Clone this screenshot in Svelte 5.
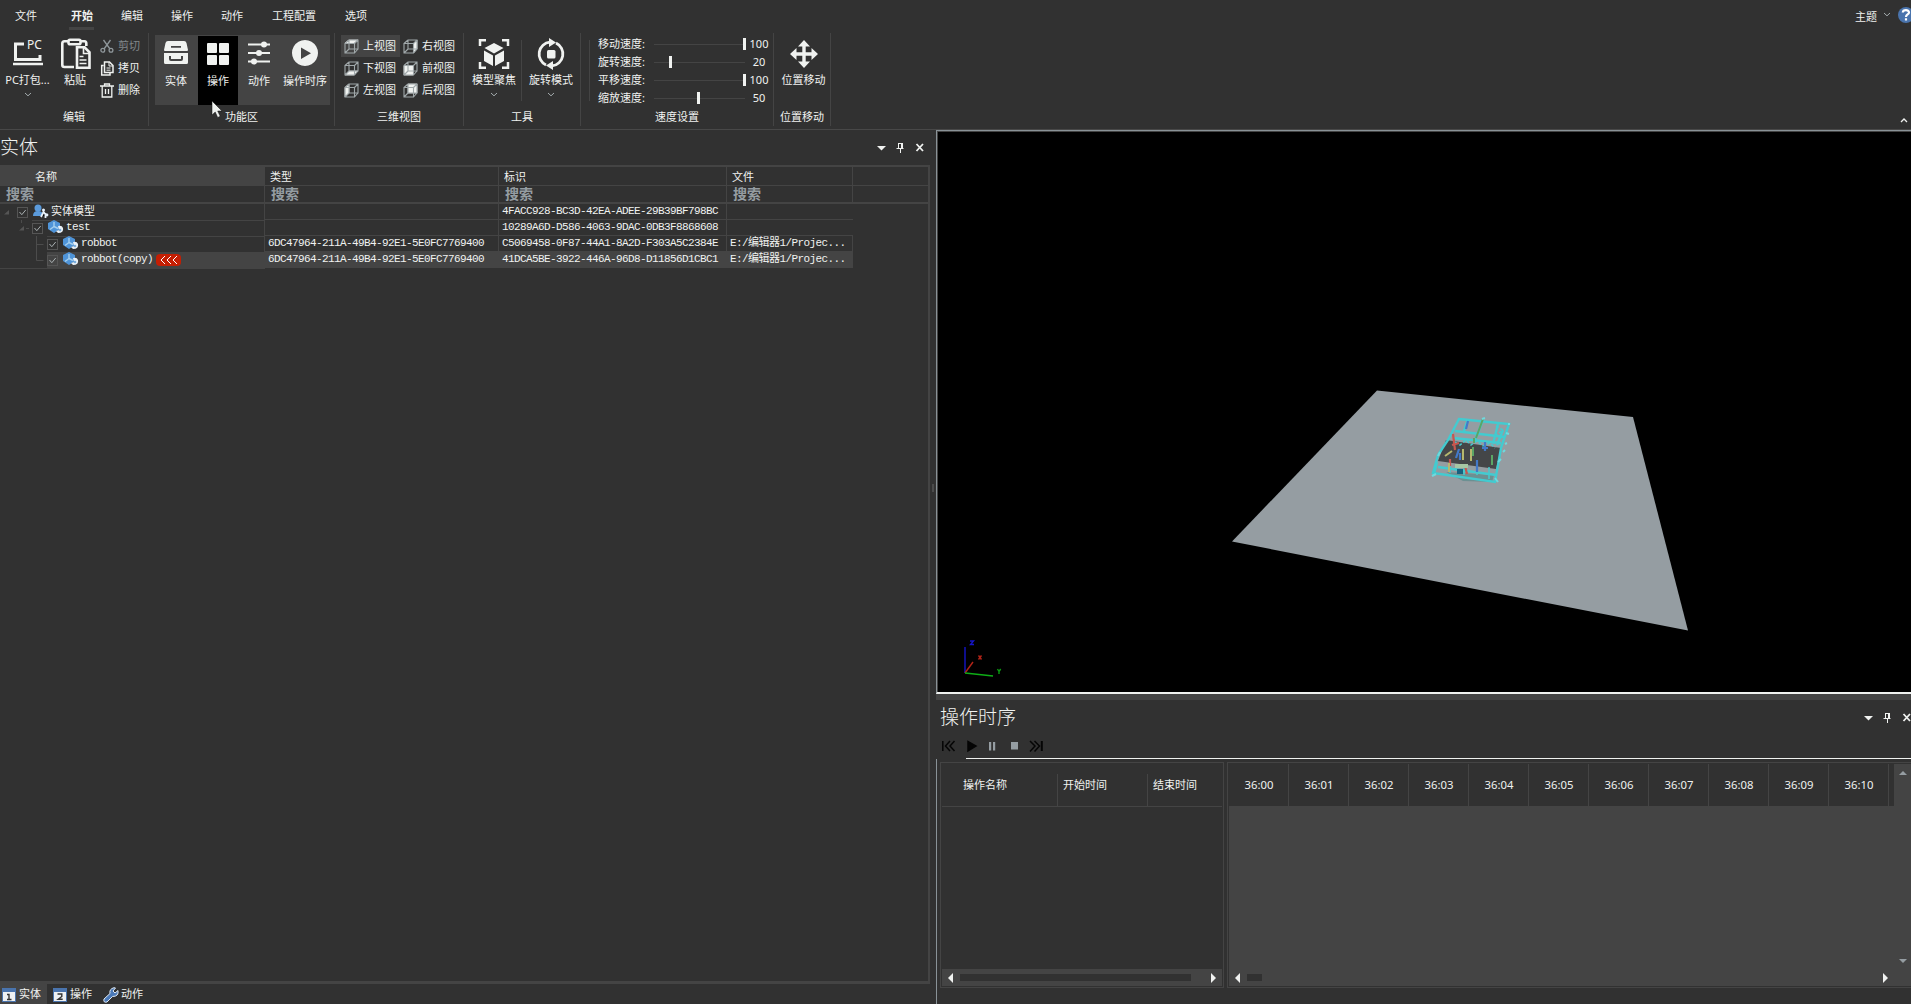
<script lang="ts">
  const tabs = ['文件', '开始', '编辑', '操作', '动作', '工程配置', '选项'];
  const functions = [
    { icon: 'drawer', label: '实体', w: 43 },
    { icon: 'grid', label: '操作', w: 40 },
    { icon: 'sliders', label: '动作', w: 43 },
    { icon: 'play', label: '操作时序', w: 49 }
  ];
  // Each view icon is a wire cube with one face filled.
  const views = [
    { label: '上视图', face: '1,4 5,1 14,1 10,4' },
    { label: '右视图', face: '10.5,4.5 14,1 14,10 10.5,14' },
    { label: '下视图', face: '1,14 5,10 14,10 10,14' },
    { label: '前视图', face: '1,5 10,5 10,14 1,14' },
    { label: '左视图', face: '1,4.5 5,1 5,10 1,14' },
    { label: '后视图', face: '5,1 14,1 14,10 5,10' }
  ];
  const speeds = [
    { label: '移动速度:', value: 100, pos: 89 },
    { label: '旋转速度:', value: 20, pos: 15 },
    { label: '平移速度:', value: 100, pos: 89 },
    { label: '缩放速度:', value: 50, pos: 43 }
  ];
  const rows = [
    { depth: 0, kind: 'root', name: '实体模型', type: '', id: '4FACC928-BC3D-42EA-ADEE-29B39BF798BC', file: false },
    { depth: 1, kind: 'cube', name: 'test', type: '', id: '10289A6D-D586-4063-9DAC-0DB3F8868608', file: false },
    { depth: 2, kind: 'cube', name: 'robbot', type: '6DC47964-211A-49B4-92E1-5E0FC7769400', id: 'C5069458-0F87-44A1-8A2D-F303A5C2384E', file: true },
    { depth: 2, kind: 'cube', name: 'robbot(copy)', type: '6DC47964-211A-49B4-92E1-5E0FC7769400', id: '41DCA5BE-3922-446A-96D8-D11856D1CBC1', file: true, sel: true }
  ];
  const times = ['36:00', '36:01', '36:02', '36:03', '36:04', '36:05', '36:06', '36:07', '36:08', '36:09', '36:10'];
</script>

{#snippet chevron()}
  <svg class="chev" width="8" height="5" viewBox="0 0 8 5"><path d="M1 1l3 2.800L7 1" /></svg>
{/snippet}

{#snippet panelTools()}
  <svg width="47" height="11" viewBox="0 0 47 11">
    <path d="M0 4h9L4.500 8.500z" fill="#f0f2f0" />
    <path d="M21.500 1v5M25.500 1v5M21 1.500h5M19.500 6.500h7M23.500 7v4M24.500 1v5" stroke="#f0f2f0" fill="none" />
    <path d="M39.500 2l6.500 7M46 2L39.500 9" stroke="#f0f2f0" stroke-width="1.800" fill="none" />
  </svg>
{/snippet}

<div class="app">
  <header class="ribbon">
    <nav>
      {#each tabs as t, i}<span class:first={i === 0} class:on={i === 1} class:wide={i === 5}>{t}</span>{/each}
      <div class="theme">
        <span>主题</span>
        {@render chevron()}
        <svg class="help" width="16" height="16" viewBox="0 0 16 16">
          <circle cx="8" cy="8" r="8" fill="#4a74ad" />
          <path d="M4.800 5.500C5 2.500 11 2.300 11 5.500C11 7.600 8 7.400 8 10M8 11.300v2.200" stroke="#fff" stroke-width="2.200" fill="none" />
        </svg>
      </div>
    </nav>

    <div class="groups">
      <section class="group g-edit">
        <div class="tools">
          <div class="big b-pc">
            <svg width="32" height="32" viewBox="0 0 32 32">
              <path d="M12 6H3.500V21.500H28V17" stroke="#f0f2f0" stroke-width="3" fill="none" />
              <path d="M1 26h30" stroke="#f0f2f0" stroke-width="2.500" />
              <text x="15" y="10.500" font-size="12" fill="#f0f2f0">PC</text>
            </svg>
            <b>PC打包...</b>{@render chevron()}
          </div>
          <div class="big b-paste">
            <svg width="32" height="32" viewBox="0 0 32 32" fill="none" stroke="#f0f2f0" stroke-width="2.600">
              <path d="M8 3.300H4.500Q2.300 3.300 2.300 5.500V27Q2.300 29 4.500 29H14M21 3.300h3.500Q26.300 3.300 26.300 5.500V8" />
              <rect x="8.500" y="1.800" width="12" height="4.500" rx="1.500" />
              <path d="M17 9.300h7.500l5 5V29.700H17z" />
              <path d="M23.500 9v6.500H30M19.500 18.500h4M19.500 22h7M19.500 25.500h7" stroke-width="1.600" />
            </svg>
            <b>粘贴</b>
          </div>
          <div class="small-col">
            <div class="small dim">
              <svg width="14" height="14" viewBox="0 0 14 14" fill="none" stroke="#8f979b" stroke-width="1.300">
                <path d="M3.500 1l6.500 9M10.500 1L4 10" /><circle cx="2.800" cy="11.200" r="1.900" /><circle cx="11" cy="11.200" r="1.900" />
              </svg><b>剪切</b>
            </div>
            <div class="small">
              <svg width="14" height="15" viewBox="0 0 14 15" fill="none" stroke="#f0f2f0" stroke-width="1.500">
                <path d="M3.500 4.500H1.700V14H10V12M4.500 1h5l3.500 3.500V11.500H4.500z" /><path d="M9 1v4h4M6.500 7h4M6.500 9.200h4" stroke-width="1" />
              </svg><b>拷贝</b>
            </div>
            <div class="small">
              <svg width="14" height="15" viewBox="0 0 14 15" fill="none" stroke="#f0f2f0" stroke-width="1.300">
                <path d="M0 3h14M4.500 3V1h5v2M2.200 3v11h9.600V3M5.500 6v5M8.500 6v5" />
              </svg><b>删除</b>
            </div>
          </div>
        </div>
        <footer>编辑</footer>
      </section>

      <section class="group g-func">
        <div class="func">
          {#each functions as f, i}
            <div class="fbtn" class:black={i === 1} style:width="{f.w}px">
              <svg width="28" height="28" viewBox="0 0 28 28" fill="#f0f2f0">
                {#if f.icon === 'drawer'}
                  <path fill-rule="evenodd" d="M6 2h16q2 0 2.500 2l1.500 7q0 1-1 1H3q-1 0-1-1l1.500-7Q4 2 6 2zM9 7v1.800h10V7z" />
                  <path fill-rule="evenodd" d="M2 14h24v9.500q0 1.500-1.500 1.500h-21Q2 25 2 23.500zM7 17v3q0 2 2 2h10q2 0 2-2v-3h-2v3H9v-3z" />
                {:else if f.icon === 'grid'}
                  <rect x="3" y="3" width="10" height="10" rx="1" /><rect x="15" y="3" width="10" height="10" rx="1" />
                  <rect x="3" y="15" width="10" height="10" rx="1" /><rect x="15" y="15" width="10" height="10" rx="1" />
                {:else if f.icon === 'sliders'}
                  <path d="M3 4.500h22v2H3zM3 13h22v2H3zM3 21.500h22v2H3z" />
                  <circle cx="19" cy="5.500" r="3" /><circle cx="14" cy="14" r="3" /><circle cx="9" cy="22.500" r="3" />
                {:else}
                  <path fill-rule="evenodd" d="M14 1a13 13 0 1 0 .01 0zM10 8.500v11.500l10-5.800z" />
                {/if}
              </svg>
              <b>{f.label}</b>
            </div>
          {/each}
        </div>
        <footer>功能区</footer>
      </section>

      <section class="group g-view">
        <div class="views">
          {#each views as v, i}
            <div class="view" class:lit={i === 0}>
              <svg width="15" height="15" viewBox="0 0 15 15" fill="none" stroke="#a0a8aa" stroke-width="1.100">
                <polygon points={v.face} fill="#f0f2f0" stroke="#f0f2f0" stroke-width=".7" />
                <path d="M1 4.500h9.500V14H1zM5 1h9v9H5zM1 4.500L5 1M10.500 4.500L14 1M10.500 14L14 10M1 14l4-4" />
              </svg><b>{v.label}</b>
            </div>
          {/each}
        </div>
        <footer>三维视图</footer>
      </section>

      <section class="group g-tool">
        <div class="tools">
          <div class="big b-focus">
            <svg width="32" height="32" viewBox="0 0 32 32">
              <path d="M2 8V2.200h6M24 2.200h6V8M30 24v5.800h-6M8 29.800H2V24" stroke="#f0f2f0" stroke-width="2.500" fill="none" />
              <path d="M16 5l9.500 5L16 15.500 6.500 10zM6 12.500l9 5V28l-9-5zM26 12.500l-9 5V28l9-5z" fill="#f0f2f0" />
            </svg>
            <b>模型聚焦</b>{@render chevron()}
          </div>
          <i class="bar"></i>
          <div class="big b-rot">
            <svg width="32" height="32" viewBox="0 0 32 32">
              <path d="M11 27A12 12 0 0 1 15 4.200M21 5A12 12 0 0 1 17 27.800" stroke="#f0f2f0" stroke-width="2.800" fill="none" />
              <path d="M14 0l7 4.500-7 4.500zM18 23v9l-7-4.500z" fill="#f0f2f0" />
              <rect x="12" y="12" width="8.500" height="8.500" rx="1.500" fill="#f0f2f0" />
            </svg>
            <b>旋转模式</b>{@render chevron()}
          </div>
        </div>
        <footer>工具</footer>
      </section>

      <section class="group g-speed">
        <div class="speeds">
          {#each speeds as s}
            <div class="speed">
              <span>{s.label}</span>
              <div class="track"><i style:margin-left="{s.pos}px"></i></div>
              <em>{s.value}</em>
            </div>
          {/each}
        </div>
        <footer>速度设置</footer>
      </section>

      <section class="group g-move">
        <div class="tools">
          <div class="big b-move">
            <svg width="32" height="32" viewBox="0 0 32 32" fill="#f0f2f0">
              <path d="M16 2l6 6.500h-4.300v5.800h5.800V10L30 16l-6.500 6v-4.300h-5.800v5.800H22L16 30l-6-6.500h4.300v-5.800H8.500V22L2 16l6.500-6v4.300h5.800V8.500H10z" />
            </svg>
            <b>位置移动</b>
          </div>
        </div>
        <footer>位置移动</footer>
      </section>
      <div class="collapse"><svg width="8" height="5" viewBox="0 0 8 5"><path d="M1 4l3-3 3 3" stroke="#f0f2f0" stroke-width="1.300" fill="none" /></svg></div>
    </div>
  </header>

  <main>
    <div class="left">
      <div class="title"><h2>实体</h2>{@render panelTools()}</div>
      <div class="tree">
        <div class="trow head"><span class="c1">名称</span><span>类型</span><span>标识</span><span>文件</span><span></span></div>
        <div class="trow search"><span>搜索</span><span>搜索</span><span>搜索</span><span>搜索</span><span></span></div>
        {#each rows as r, i}
          <div class="trow item" class:sel={r.sel}>
            <span class="namecell">
              <svg class="lines" height="16" viewBox="0 0 {17 + r.depth * 15} 16" width={17 + r.depth * 15}>
                {#if r.depth === 0}<path d="M9 6v4.500H4z" fill="#555" />
                {:else if r.depth === 1}<path d="M24 6v4.500h-5z" fill="#555" /><path d="M21.500 0v3M26 8.500h3" stroke="#4c4c4c" />
                {:else}<path d="M36.500 0V{i === 2 ? 16 : 8.5}M36.500 8.500h7" stroke="#4c4c4c" fill="none" />{/if}
              </svg>
              <svg class="check" width="11" height="11" viewBox="0 0 11 11"><rect x=".5" y=".5" width="10" height="10" fill="none" stroke="#555" /><path d="M2.500 5l2.300 2.700L8.700 3" fill="none" stroke="#a9b0b2" /></svg>
              <svg class="kind" width="16" height="14" viewBox="0 0 16 14">
                {#if r.kind === 'root'}
                  <circle cx="5" cy="4" r="3.500" fill="#5b9bdc" /><path d="M0 12q0-5 5-5t5 5z" fill="#5b9bdc" />
                  <circle cx="10.500" cy="6" r="1.500" fill="#e9f2fa" /><path d="M8 13l2.500-5 2.500 3M12.500 9v5" stroke="#e9f2fa" stroke-width="1.800" /><circle cx="14" cy="11" r="1.400" fill="#e9f2fa" />
                {:else}
                  <path d="M6 0l6 3v6l-6 4-6-4V3z" fill="#4f94d8" /><path d="M6 2v5M6 6.500L2 9.500M6 6.500l4 2" stroke="#a5d0ef" stroke-width="1.400" />
                  <path d="M10 6q4-1 5 2 1 5-5 5l-2-2 3-1z" fill="#eaf1f7" /><circle cx="12" cy="10" r="1.300" fill="#79addb" />
                {/if}
              </svg>
              <span class={r.kind === 'root' ? 'cn' : 'mono'}>{r.name}</span>
              {#if r.sel}<span class="badge"><svg width="18" height="8" viewBox="0 0 18 8"><path d="M5 0L1 4l4 4M11 0L7 4l4 4M17 0l-4 4 4 4" stroke="#fff" fill="none" /></svg></span>{/if}
            </span>
            <span class="mono">{r.type}</span>
            <span class="mono">{r.id}</span>
            <span class="mono">{#if r.file}E:/<span class="cjk">编辑器</span>1/Projec...{/if}</span>
          </div>
        {/each}
      </div>
      <div class="dock">
        <span class="on"><svg width="14" height="14" viewBox="0 0 14 14"><rect width="14" height="14" fill="#4a74ad" /><rect x="1" y="4" width="12" height="9" fill="#eef1f3" /><path d="M5 6.500h2V11M5 11.500h4.500" stroke="#333" stroke-width="1.400" fill="none" /></svg><b>实体</b></span>
        <span><svg width="14" height="14" viewBox="0 0 14 14"><rect width="14" height="14" fill="#4a74ad" /><rect x="1" y="4" width="12" height="9" fill="#eef1f3" /><path d="M4.500 6h4.300v2.500L5.200 11.300h4.500" stroke="#333" stroke-width="1.400" fill="none" /></svg><b>操作</b></span>
        <span class="wr"><svg width="16" height="16" viewBox="0 0 16 16"><path d="M1 12l6-5.500Q6 2 11 .7l1.500.3L10 4l2 2 3-2.500Q16 9.500 9.500 9.500L4 15Q0 16 1 12z" fill="#4a79b8" stroke="#dfe9f3" /></svg><b>动作</b></span>
      </div>
    </div>
    <div class="split"><i></i></div>
    <div class="right">
      <div class="viewport">
        <svg width="973" height="560" viewBox="938 132 973 560">
          <path d="M1377 390.500L1633 417 1688 630.500 1232 541.500z" fill="#959da2" />
          <g class="model">
            <path d="M1446 472l48 3-2 7-29-1z" fill="#6c9092" />
            <path d="M1446 440l55 8-5 21-58-8z" fill="#444648" />
            <g fill="none" stroke="#43cbd0" stroke-width="2.400">
              <path d="M1459 419l50 5-8 24-6 34-62-9 5-18 10-15zM1455 431l50 6M1453 438l48 5M1438 467l58 8M1483 420l-8 20M1468 419l-4 12M1498 424l-5 20M1503 430l-6 15M1437 462l-3 12" />
              <path d="M1450 463v10M1464 464v11M1477 464v11M1489 467v12" stroke-width="1.500" />
              <path d="M1455 442l5 3 6-5 5 5 6-4 6 5 7-3 5 5M1496 426l7 4-7 5 6 4" stroke-width="1.500" stroke-dasharray="3 2" />
            </g>
            <path d="M1483 419l-7 19M1473 447v9M1471 455v6M1492 455v10M1474 438v5" stroke="#5ba565" stroke-width="2" />
            <path d="M1453 434l2 16M1450 459v7M1459 443l-7 2M1465 466l2 8" stroke="#c65750" stroke-width="2.200" />
            <path d="M1459 449l-3 9M1485 442v9M1468 421l-2 8M1482 448h6M1477 460v12M1460 453v7" stroke="#4379c8" stroke-width="2.200" />
            <path d="M1463 449v11M1445 456l7-5M1471 449v12M1449 463v9" stroke="#b6b86e" stroke-width="2" />
            <path d="M1455 464h13v4h-13z" fill="#a7c6a4" /><path d="M1457 469h6v5h-6z" fill="#17617f" />
            <path d="M1506 433l3 1M1503 452l2-2M1498 462l3-3M1440 452l-2 4M1495 478l3 4M1436 474l-4 2M1482 419l3-1M1508 424l2 0M1505 444l2-1" stroke="#6edade" stroke-width="2" />
          </g>
          <g fill="none" stroke-width="1.400">
            <path d="M965 673v-26" stroke="#1515c8" /><path d="M965 673l8-11" stroke="#b32418" /><path d="M965 673l28 3" stroke="#0eae16" />
            <path d="M970 641h3.500l-3 3.500h3.500" stroke="#1515c8" /><path d="M978.500 655.500l3 4M981.500 655.500l-3 4" stroke="#b32418" /><path d="M997.500 669l1.500 2.500 1.700-2.500M999 671v3" stroke="#0b9b12" />
          </g>
        </svg>
      </div>
      <div class="gap"></div>
      <div class="title t2"><h2>操作时序</h2>{@render panelTools()}</div>
      <div class="player">
        <svg width="102" height="14" viewBox="0 0 102 14" fill="none" stroke="#050505" stroke-width="1.500">
          <path d="M.8 2v10M8 2L3.500 7 8 12M12.500 2L8 7l4.500 5" /><path d="M26 2.500v9.500L34 7z" fill="#050505" />
          <path d="M47 3h2.200v8.500H47zM51 3h2.200v8.500H51zM69 3h7v7.500h-7z" fill="#959da2" stroke="none" />
          <path d="M88 2l5 5-5 5.500M92.500 2l5 5-5 5.500" /><path d="M99.800 2v10" stroke-width="2" />
        </svg>
      </div>
      <div class="whiteline"></div>
      <div class="timeline">
        <div class="ops">
          <div class="opshead"><span>操作名称</span><span>开始时间</span><span>结束时间</span></div>
          <div class="opsbody"></div>
          <div class="hscroll"><i class="al"></i><i class="thumb"></i><i class="ar"></i></div>
        </div>
        <div class="chart">
          <div class="chartmain">
            <div class="times">{#each times as t}<span>{t}</span>{/each}</div>
            <div class="canvas"></div>
            <div class="hscroll"><i class="al"></i><i class="thumb short"></i><i class="ar"></i></div>
          </div>
          <div class="vscroll"><i class="au"></i><i class="ad"></i></div>
        </div>
      </div>
    </div>
  </main>
  <svg class="cursor" width="13" height="19" viewBox="0 0 13 19"><path d="M1 1v14l3.200-3 2.500 5.500 2.500-1.200L6.700 11H11z" fill="#f0f2f0" stroke="#111" stroke-width=".5" /></svg>
</div>

<style>
  :global(body) { background: #313131; overflow: hidden; }
  .app { position: relative; width: 1911px; height: 1004px; overflow: hidden; display: flex; flex-direction: column; background: #313131; color: #f0f2f0; font: 11px/14px "Noto Sans", "Noto Sans CJK SC", sans-serif; }
  .app * { box-sizing: border-box; }
  svg { display: block; flex: none; }
  span, b, h2, footer { white-space: nowrap; }
  b { font-weight: 400; }

  .ribbon { height: 130px; flex: none; border-bottom: 1px solid #484848; }
  nav { display: flex; height: 33px; padding-left: 15px; }
  nav > span { height: 30px; padding-top: 9px; margin-right: 28px; }
  nav > .first { margin-right: 32px; }
  nav > .on { font-weight: 700; padding-left: 2px; padding-right: 1px; border-bottom: 3px solid #444; margin-right: 27px; }
  nav > .wide { margin: 0 29px 0 1px; }
  .theme { margin-left: auto; display: flex; width: 56px; padding-top: 7px; }
  .theme span { padding-top: 3px; }
  .theme .chev { margin: 5px 7px 0 6px; }
  .chev path { fill: none; stroke: #a4acae; stroke-width: 1; }

  .groups { display: flex; height: 96px; }
  .group { display: flex; flex-direction: column; height: 93px; border-right: 1px solid #444; flex: none; }
  footer { text-align: center; height: 17px; line-height: 15px; margin-top: auto; }
  .g-edit { width: 149px; }
  .g-func { width: 186px; } .g-view { width: 129px; } .g-tool { width: 117px; } .g-speed { width: 193px; } .g-move { width: 57px; }
  .tools { display: flex; height: 72px; }
  .big { display: flex; flex-direction: column; align-items: center; padding-top: 5px; }
  .big b { margin-top: 3px; }
  .big .chev { margin-top: 5px; }
  .b-pc { width: 46px; margin-left: 4px; padding-left: 1px; }
  .b-paste { width: 48px; margin-left: 1px; }
  .b-paste svg { margin-left: 1px; }
  .small-col { display: flex; flex-direction: column; margin-left: 1px; padding-top: 2px; }
  .small { display: flex; align-items: center; gap: 4px; height: 22px; }
  .dim { color: #81888b; }
  .func { display: flex; height: 70px; margin: 2px 0 0 6px; width: 175px; background: #444; }
  .fbtn { display: flex; flex-direction: column; align-items: center; padding: 4px 1px 0 0; }
  .fbtn b { margin-top: 7px; }
  .black { background: #000; height: 69px; margin-top: 1px; padding: 4px 0 0; }
  .black b { margin-top: 6px; }
  .views { display: grid; grid-template-columns: 59px 59px; grid-auto-rows: 22px; padding: 2px 0 0 6px; }
  .view { display: flex; align-items: center; gap: 3px; padding-left: 3px; }
  .view b { padding-left: 1px; }
  .lit { background: #444; }
  .b-focus { width: 44px; margin-left: 8px; }
  .b-rot { width: 44px; margin-left: 7px; }
  .bar { width: 1px; height: 61px; background: #444; margin: 7px 0 0 5px; }
  .speeds { border-left: 1px solid #444; margin: 7px 0 0 8px; height: 61px; padding-left: 8px; }
  .speed { display: flex; height: 18px; align-items: center; position: relative; top: -5px; }
  .speed span { width: 56px; }
  .track { width: 92px; height: 12px; display: flex; background: linear-gradient(#444, #444) 0 6px / 91px 1px no-repeat; }
  .track i { width: 3px; height: 12px; background: #f0f2f0; flex: none; }
  .speed em { font-style: normal; width: 26px; text-align: center; }
  .b-move { width: 58px; padding-left: 3px; }
  .collapse { margin: 85px 3px 0 auto; }

  main { display: flex; height: 874px; }
  .left { width: 930px; display: flex; flex-direction: column; flex: none; }
  .title { display: flex; height: 35px; align-items: center; justify-content: space-between; padding: 0 6px 1px 0; flex: none; }
  .title > :global(svg) { margin-top: 1px; }
  h2 { font-size: 19px; line-height: 28px; font-weight: 300; margin: 0; }
  .tree { height: 819px; border: solid #444; border-width: 2px 2px 3px 0; background: #313131; flex: none; }
  .trow { display: grid; grid-template-columns: 265px 234px 228px 126px 1fr; height: 16px; }
  .trow > span { border-right: 1px solid #444; border-bottom: 1px solid #444; }
  .trow > span:last-child:empty { border-right: 0; }
  .head { height: 19px; }
  .head > span { padding: 2px 0 0 5px; line-height: 15px; }
  .head > .c1 { padding-left: 35px; background: #444; }
  .search { height: 18px; font-size: 14px; font-weight: 700; line-height: 16px; color: #959da2; }
  .search > span { padding-left: 6px; border-bottom-width: 2px; }
  .item { width: 853px; grid-template-columns: 265px 234px 228px 126px; }
  .item > span { line-height: 15px; padding-left: 3px; }
  .item > .namecell { display: flex; padding: 0; }
  .namecell > .check { margin-top: 3px; }
  .namecell > .kind { margin: 0 2px 0 5px; }
  .namecell > .cn { line-height: 13px; }
  .mono { font-family: "Liberation Mono", "Noto Sans CJK SC", monospace; font-size: 11px; letter-spacing: -.6px; white-space: pre; }
  .item > .mono { height: 16px; }
  .cjk { letter-spacing: -.5px; }
  .sel > span { background: #444; }
  .lines { background: #313131; }
  .badge { display: flex; align-items: center; justify-content: center; width: 25px; height: 12px; margin: 2px 0 0 3px; border-radius: 4px; background: #c41e03; }
  .dock { display: flex; height: 20px; }
  .dock span { display: flex; align-items: center; gap: 3px; width: 51px; padding: 1px 0 0 2px; }
  .dock b { padding-bottom: 2px; }
  .dock .on { width: 47px; background: #444; margin-right: 4px; }
  .dock .wr { gap: 2px; padding-left: 1px; }
  .split { width: 6px; flex: none; }
  .split i { display: block; width: 2px; height: 8px; margin: 354px 0 0 2px; background: #4b4b4b; }
  .right { width: 975px; display: flex; flex-direction: column; flex: none; }
  .viewport { height: 564px; border-left: 1px solid #899297; border-top: 1px solid #899297; border-bottom: 2px solid #f0f2f0; background: #000; padding: 1px 0 0 1px; box-shadow: inset 1px 1px #444; flex: none; }
  .gap { height: 6px; background: #444; flex: none; }
  .t2 { height: 37px; padding: 0 0 4px 4px; }
  .player { height: 21px; padding: 2px 0 0 6px; flex: none; }
  .whiteline { height: 1px; margin-left: 30px; background: #f0f2f0; flex: none; }
  .timeline { display: flex; height: 246px; padding: 3px 0 16px 3px; border-left: 1px solid #899297; gap: 3px; }
  .ops { width: 284px; border: 1px solid #444; padding: 1px; display: flex; flex-direction: column; }
  .opshead { display: flex; height: 43px; padding-left: 1px; border-bottom: 1px solid #444; }
  .opshead span { margin-top: 10px; border-right: 1px solid #444; width: 90px; padding: 4px 0 0 5px; }
  .opshead span:first-child { width: 115px; padding-left: 20px; }
  .opshead span:last-child { border: 0; width: 70px; }
  .opsbody { flex: 1; }
  .hscroll { display: flex; align-items: center; height: 17px; background: #444; padding: 0 6px; }
  .hscroll i, .vscroll i { width: 0; height: 0; border: 5px solid transparent; }
  .hscroll .al { border-right-color: #f0f2f0; border-left: 0; }
  .hscroll .ar { border-left-color: #f0f2f0; border-right: 0; margin-left: auto; }
  .hscroll .thumb { width: 231px; height: 7px; background: #313131; border: 0; margin-left: 7px; }
  .hscroll .short { width: 15px; }
  .chart { flex: 1; border: 1px solid #444; border-right: 0; padding: 1px 0 1px 1px; display: flex; }
  .chartmain { width: 665px; display: flex; flex-direction: column; }
  .times { display: flex; height: 42px; font-size: 11.3px; }
  .times span { width: 60px; border-right: 1px solid #444; text-align: center; padding: 14px 0 0 1px; flex: none; }
  .canvas { flex: 1; background: #444; }
  .vscroll { flex: 1; background: #444; display: flex; flex-direction: column; align-items: center; padding: 7px 0 23px; }
  .vscroll .au { border-bottom-color: #959da2; border-width: 0 4px 4px; }
  .vscroll .ad { border-top-color: #959da2; border-width: 4px 4px 0; margin-top: auto; }
  .cursor { position: absolute; left: 211px; top: 100px; }
</style>
